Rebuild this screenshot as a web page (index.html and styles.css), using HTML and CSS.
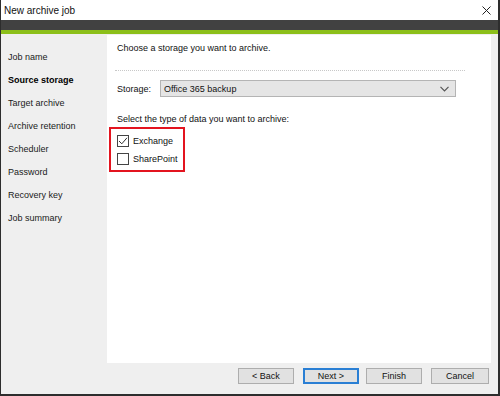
FILE: index.html
```html
<!DOCTYPE html>
<html lang="en">

<head>
    <meta charset="UTF-8">
    <title>New archive job</title>
    <link rel="stylesheet" href="styles.css">
</head>

<body>
    <div class="window">
        <!-- title bar -->
        <div class="titlebar">
            <span class="title">New archive job</span>
            <svg class="close" width="9" height="9" viewBox="0 0 9 9">
                <path d="M0.5 0.5 L8.5 8.5 M8.5 0.5 L0.5 8.5" stroke="#222" stroke-width="1" fill="none"/>
            </svg>
        </div>
        <div class="darkbar"></div>
        <div class="greenbar"></div>

        <div class="main">
            <div class="upper">
                <ul class="steps">
                    <li>Job name</li>
                    <li class="active">Source storage</li>
                    <li>Target archive</li>
                    <li>Archive retention</li>
                    <li>Scheduler</li>
                    <li>Password</li>
                    <li>Recovery key</li>
                    <li>Job summary</li>
                </ul>

                <div class="panel">
                    <p class="intro">Choose a storage you want to archive.</p>
                    <div class="separator"></div>

                    <div class="storage-row">
                        <span class="label">Storage:</span>
                        <div class="select">
                            <span>Office 365 backup</span>
                            <svg width="9" height="6" viewBox="0 0 9 6">
                                <path d="M0.5 0.8 L4.5 4.8 L8.5 0.8" stroke="#555" stroke-width="1.2" fill="none"/>
                            </svg>
                        </div>
                    </div>

                    <p class="select-text">Select the type of data you want to archive:</p>
                    <div class="highlight">
                        <label class="check">
                            <span class="box">
                                <svg width="10" height="10" viewBox="0 0 10 10">
                                    <path d="M1 5 L3.8 7.8 L9 1.8" stroke="#333" stroke-width="1" fill="none"/>
                                </svg>
                            </span>
                            Exchange
                        </label>
                        <label class="check">
                            <span class="box"></span>
                            SharePoint
                        </label>
                    </div>
                </div>
            </div>

            <div class="buttons">
                <button class="btn">&lt; Back</button>
                <button class="btn primary">Next &gt;</button>
                <button class="btn finish">Finish</button>
                <button class="btn cancel">Cancel</button>
            </div>
        </div>
    </div>
</body>

</html>
```

FILE: styles.css
```css
body,
html {
    padding: 0;
    margin: 0;
}

body {
    width: 500px;
    height: 396px;
    font-family: "Liberation Sans", Arial, sans-serif;
    font-size: 9px;
    color: #111;
}

.window {
    box-sizing: border-box;
    width: 500px;
    height: 396px;
    border-left: 1px solid #2d2d2d;
    border-right: 2px solid #2d2d2d;
    border-bottom: 2px solid #2d2d2d;
    display: flex;
    flex-direction: column;
    background: #efefef;
}

.titlebar {
    height: 20px;
    background: #fff;
    display: flex;
    align-items: center;
    justify-content: space-between;
    padding: 0 7px 0 3px;
}

.title {
    font-size: 10px;
    color: #111;
}

.darkbar {
    height: 10px;
    background: #414141;
}

.greenbar {
    height: 4px;
    background: #8cbf1a;
}

.main {
    flex: 1;
    display: flex;
    flex-direction: column;
    padding-top: 1px;
}

.upper {
    display: flex;
    height: 328px;
    padding-right: 7px;
}

.steps {
    list-style: none;
    margin: 0;
    padding: 11px 0 0 7px;
    width: 99px;
}

.steps li {
    height: 23px;
    line-height: 23px;
    color: #1a1a1a;
}

.steps li.active {
    font-weight: bold;
    color: #000;
}

.panel {
    flex: 1;
    background: #fff;
    padding: 6px 10px 0 10px;
}

.intro {
    margin: 0;
    line-height: 14px;
}

.separator {
    margin: 15px 16px 0 -2px;
    border-top: 1px dotted #c8c8c8;
}

.storage-row {
    display: flex;
    align-items: center;
    margin-top: 9px;
}

.label {
    width: 43px;
}

.select {
    box-sizing: border-box;
    width: 296px;
    height: 17px;
    background: #e5e5e5;
    border: 1px solid #b4b4b4;
    display: flex;
    align-items: center;
    justify-content: space-between;
    padding: 0 6px 0 3px;
}

.select-text {
    margin: 16px 0 0;
    line-height: 13px;
}

.highlight {
    box-sizing: border-box;
    width: 76px;
    height: 45px;
    margin: 1px 0 0 -8px;
    border: 2px solid #e3141f;
    padding: 3px 0 0 6px;
}

.check {
    display: flex;
    align-items: center;
    height: 18px;
    gap: 4px;
}

.box {
    box-sizing: border-box;
    width: 12px;
    height: 12px;
    border: 1px solid #444;
    background: #fff;
    display: flex;
    align-items: center;
    justify-content: center;
}

.buttons {
    display: flex;
    justify-content: flex-end;
    gap: 9px;
    padding: 5px 9px 0 0;
}

.btn {
    box-sizing: border-box;
    width: 56px;
    height: 16px;
    padding: 0;
    background: #e1e1e1;
    border: 1px solid #adadad;
    font-family: "Liberation Sans", Arial, sans-serif;
    font-size: 9px;
    color: #111;
}

.btn.primary {
    border: 2px solid #2a7fd4;
    margin-right: -2px;
}

.btn.cancel {
    width: 58px;
}
```
